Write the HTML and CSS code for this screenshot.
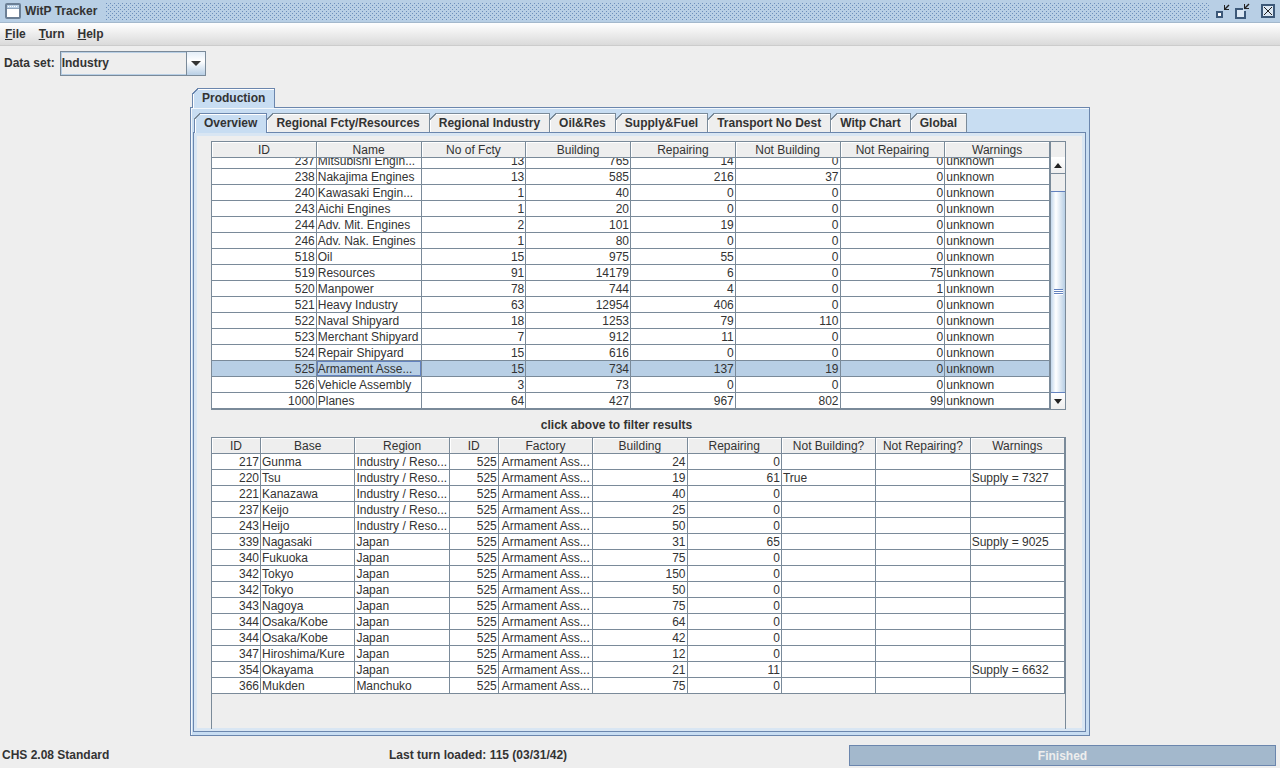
FILE: index.html
```html
<!DOCTYPE html>
<html lang="en">
<head>
    <meta charset="utf-8">
    <title>WitP Tracker</title>
    <link rel="stylesheet" href="styles.css">
</head>
<body>
    <header class="titlebar">
        <svg class="app-icon" width="16" height="16" viewBox="0 0 16 16">
            <rect x="1" y="1" width="14" height="14" rx="1" fill="#fff" stroke="#6b7f95" stroke-width="2"/>
            <path d="M2 3.500h12" stroke="#b8cfe5" stroke-width="3"/>
            <path d="M3 3.500h1M5 3.500h1M7 3.500h1M9 3.500h1M11 3.500h1" stroke="#fff"/>
            <path d="M2 5.500h12" stroke="#8fa5bd"/>
        </svg>
        <span class="title">WitP Tracker</span>
        <span class="grip"></span>
        <div class="window-buttons">
            <button aria-label="Minimize">
                <svg width="16" height="16" viewBox="0 0 16 16">
                    <rect x="3" y="9" width="5" height="5" fill="#fff" stroke="#3c5878" stroke-width="2"/>
                    <path d="M10.500 2v5M10 6.500h5" stroke="#222"/>
                    <path d="M11 6l4-4" stroke="#222" stroke-width="1.500"/>
                </svg>
            </button>
            <button aria-label="Maximize">
                <svg width="16" height="16" viewBox="0 0 16 16">
                    <path d="M9 6H2v9h9V8" fill="#dce8f4" stroke="#3c5878" stroke-width="2"/>
                    <path d="M10.500 1v5M10 5.500h5" stroke="#222"/>
                    <path d="M11 5l4-4" stroke="#222" stroke-width="1.500"/>
                </svg>
            </button>
            <button class="close" aria-label="Close">
                <svg width="16" height="16" viewBox="0 0 16 16">
                    <rect x="2" y="2" width="12" height="12" fill="#dce8f4" stroke="#3c5878" stroke-width="2"/>
                    <path d="M4 4l8 8M12 4l-8 8" stroke="#222"/>
                </svg>
            </button>
        </div>
    </header>

    <nav class="menubar">
        <button><u>F</u>ile</button>
        <button><u>T</u>urn</button>
        <button><u>H</u>elp</button>
    </nav>

    <div class="toolbar">
        <label for="dataset">Data set:</label>
        <div class="combo">
            <select id="dataset"><option>Industry</option></select>
            <span class="combo-arrow"><svg width="10" height="6" viewBox="0 0 10 6"><path d="M0 0h10L5 5z" fill="#333"/></svg></span>
        </div>
    </div>

    <main class="tabs">
        <div class="tab-row"><button class="tab active">Production</button></div>
        <div class="outer-panel">
            <div class="tab-row">
                <button class="tab active">Overview</button>
                <button class="tab">Regional Fcty/Resources</button>
                <button class="tab">Regional Industry</button>
                <button class="tab">Oil&amp;Res</button>
                <button class="tab">Supply&amp;Fuel</button>
                <button class="tab">Transport No Dest</button>
                <button class="tab">Witp Chart</button>
                <button class="tab">Global</button>
            </div>
            <div class="inner-panel">
                <div class="scroll-box">
                    <table class="summary">
                        <thead>
                            <tr><th>ID</th><th>Name</th><th>No of Fcty</th><th>Building</th><th>Repairing</th><th>Not Building</th><th>Not Repairing</th><th>Warnings</th></tr>
                        </thead>
                        <tbody>
                            <tr class="cut"><td><div>237</div></td><td><div>Mitsubishi Engin...</div></td><td><div>13</div></td><td><div>765</div></td><td><div>14</div></td><td><div>0</div></td><td><div>0</div></td><td><div>unknown</div></td></tr>
                            <tr><td>238</td><td>Nakajima Engines</td><td>13</td><td>585</td><td>216</td><td>37</td><td>0</td><td>unknown</td></tr>
                            <tr><td>240</td><td>Kawasaki Engin...</td><td>1</td><td>40</td><td>0</td><td>0</td><td>0</td><td>unknown</td></tr>
                            <tr><td>243</td><td>Aichi Engines</td><td>1</td><td>20</td><td>0</td><td>0</td><td>0</td><td>unknown</td></tr>
                            <tr><td>244</td><td>Adv. Mit. Engines</td><td>2</td><td>101</td><td>19</td><td>0</td><td>0</td><td>unknown</td></tr>
                            <tr><td>246</td><td>Adv. Nak. Engines</td><td>1</td><td>80</td><td>0</td><td>0</td><td>0</td><td>unknown</td></tr>
                            <tr><td>518</td><td>Oil</td><td>15</td><td>975</td><td>55</td><td>0</td><td>0</td><td>unknown</td></tr>
                            <tr><td>519</td><td>Resources</td><td>91</td><td>14179</td><td>6</td><td>0</td><td>75</td><td>unknown</td></tr>
                            <tr><td>520</td><td>Manpower</td><td>78</td><td>744</td><td>4</td><td>0</td><td>1</td><td>unknown</td></tr>
                            <tr><td>521</td><td>Heavy Industry</td><td>63</td><td>12954</td><td>406</td><td>0</td><td>0</td><td>unknown</td></tr>
                            <tr><td>522</td><td>Naval Shipyard</td><td>18</td><td>1253</td><td>79</td><td>110</td><td>0</td><td>unknown</td></tr>
                            <tr><td>523</td><td>Merchant Shipyard</td><td>7</td><td>912</td><td>11</td><td>0</td><td>0</td><td>unknown</td></tr>
                            <tr><td>524</td><td>Repair Shipyard</td><td>15</td><td>616</td><td>0</td><td>0</td><td>0</td><td>unknown</td></tr>
                            <tr class="selected"><td>525</td><td class="focus">Armament Asse...</td><td>15</td><td>734</td><td>137</td><td>19</td><td>0</td><td>unknown</td></tr>
                            <tr><td>526</td><td>Vehicle Assembly</td><td>3</td><td>73</td><td>0</td><td>0</td><td>0</td><td>unknown</td></tr>
                            <tr><td>1000</td><td>Planes</td><td>64</td><td>427</td><td>967</td><td>802</td><td>99</td><td>unknown</td></tr>
                        </tbody>
                    </table>
                    <div class="scrollbar">
                        <div class="corner"></div>
                        <button aria-label="Scroll up"><svg width="8" height="5" viewBox="0 0 8 5"><path d="M0 5h8L4 0z" fill="#222"/></svg></button>
                        <div class="track"></div>
                        <div class="thumb"><span></span></div>
                        <button aria-label="Scroll down"><svg width="8" height="5" viewBox="0 0 8 5"><path d="M0 0h8L4 5z" fill="#222"/></svg></button>
                    </div>
                </div>

                <p class="hint">click above to filter results</p>

                <div class="detail-box">
                    <table class="detail">
                        <colgroup><col class="id"><col><col><col class="id"><col><col><col><col><col><col></colgroup>
                        <thead>
                            <tr><th>ID</th><th>Base</th><th>Region</th><th>ID</th><th>Factory</th><th>Building</th><th>Repairing</th><th>Not Building?</th><th>Not Repairing?</th><th>Warnings</th></tr>
                        </thead>
                        <tbody>
                            <tr><td>217</td><td>Gunma</td><td>Industry / Reso...</td><td>525</td><td>Armament Ass...</td><td>24</td><td>0</td><td></td><td></td><td></td></tr>
                            <tr><td>220</td><td>Tsu</td><td>Industry / Reso...</td><td>525</td><td>Armament Ass...</td><td>19</td><td>61</td><td>True</td><td></td><td>Supply = 7327</td></tr>
                            <tr><td>221</td><td>Kanazawa</td><td>Industry / Reso...</td><td>525</td><td>Armament Ass...</td><td>40</td><td>0</td><td></td><td></td><td></td></tr>
                            <tr><td>237</td><td>Keijo</td><td>Industry / Reso...</td><td>525</td><td>Armament Ass...</td><td>25</td><td>0</td><td></td><td></td><td></td></tr>
                            <tr><td>243</td><td>Heijo</td><td>Industry / Reso...</td><td>525</td><td>Armament Ass...</td><td>50</td><td>0</td><td></td><td></td><td></td></tr>
                            <tr><td>339</td><td>Nagasaki</td><td>Japan</td><td>525</td><td>Armament Ass...</td><td>31</td><td>65</td><td></td><td></td><td>Supply = 9025</td></tr>
                            <tr><td>340</td><td>Fukuoka</td><td>Japan</td><td>525</td><td>Armament Ass...</td><td>75</td><td>0</td><td></td><td></td><td></td></tr>
                            <tr><td>342</td><td>Tokyo</td><td>Japan</td><td>525</td><td>Armament Ass...</td><td>150</td><td>0</td><td></td><td></td><td></td></tr>
                            <tr><td>342</td><td>Tokyo</td><td>Japan</td><td>525</td><td>Armament Ass...</td><td>50</td><td>0</td><td></td><td></td><td></td></tr>
                            <tr><td>343</td><td>Nagoya</td><td>Japan</td><td>525</td><td>Armament Ass...</td><td>75</td><td>0</td><td></td><td></td><td></td></tr>
                            <tr><td>344</td><td>Osaka/Kobe</td><td>Japan</td><td>525</td><td>Armament Ass...</td><td>64</td><td>0</td><td></td><td></td><td></td></tr>
                            <tr><td>344</td><td>Osaka/Kobe</td><td>Japan</td><td>525</td><td>Armament Ass...</td><td>42</td><td>0</td><td></td><td></td><td></td></tr>
                            <tr><td>347</td><td>Hiroshima/Kure</td><td>Japan</td><td>525</td><td>Armament Ass...</td><td>12</td><td>0</td><td></td><td></td><td></td></tr>
                            <tr><td>354</td><td>Okayama</td><td>Japan</td><td>525</td><td>Armament Ass...</td><td>21</td><td>11</td><td></td><td></td><td>Supply = 6632</td></tr>
                            <tr><td>366</td><td>Mukden</td><td>Manchuko</td><td>525</td><td>Armament Ass...</td><td>75</td><td>0</td><td></td><td></td><td></td></tr>
                        </tbody>
                    </table>
                </div>
            </div>
        </div>
    </main>

    <footer class="statusbar">
        <span>CHS 2.08 Standard</span>
        <span>Last turn loaded: 115 (03/31/42)</span>
        <div class="progress" role="progressbar" aria-valuenow="100">Finished</div>
    </footer>
</body>
</html>
```
FILE: styles.css
```css
* { box-sizing: border-box; }
body {
    margin: 0;
    min-height: 100vh;
    display: flex;
    flex-direction: column;
    background: #eee;
    color: #333;
    font: bold 12px/15px "Liberation Sans", Arial, sans-serif;
}
button, select {
    font: inherit;
    color: inherit;
    background: none;
    border: none;
    padding: 0;
    margin: 0;
}

/* title bar */
.titlebar {
    display: flex;
    align-items: center;
    height: 23px;
    padding: 0 4px 0 5px;
    background: #b8cfe5;
    border-bottom: 1px solid #a3b8cc;
}
.title { margin: 0 9px 0 4px; }
.grip {
    flex: 1;
    height: 17px;
    background-image:
        linear-gradient(90deg, #7394c0 1px, transparent 1px),
        linear-gradient(#b8cfe5 1px, transparent 1px);
    /* two offset layers of single dots */
    background:
        conic-gradient(from 270deg at 1px 1px, #6c8ebb 90deg, transparent 0) 0 0 / 4px 4px,
        conic-gradient(from 270deg at 1px 1px, #6c8ebb 90deg, transparent 0) 2px 2px / 4px 4px;
}
.window-buttons { display: flex; gap: 4px; margin-left: 5px; }
.window-buttons button { width: 16px; height: 16px; }
.window-buttons svg { display: block; }
.window-buttons .close { margin-left: 6px; }

/* menu */
.menubar {
    display: flex;
    gap: 13px;
    height: 23px;
    padding: 0 5px;
    background: linear-gradient(#fff, #dadada);
    border-bottom: 1px solid #ccc;
}

.toolbar {
    display: flex;
    align-items: center;
    gap: 5px;
    padding: 5px 4px 12px;
}
.combo {
    display: flex;
    width: 146px;
    height: 25px;
    border: 1px solid #7a8a99;
    box-shadow: inset 0 0 0 1px #b8cfe5;
}
.combo select {
    flex: 1;
    appearance: none;
    padding-left: 1px;
}
.combo-arrow {
    display: flex;
    align-items: center;
    justify-content: center;
    width: 19px;
    border-left: 1px solid #7a8a99;
    background: linear-gradient(#e4eef8, #fff 40%, #b8cfe5);
}

/* tabs */
.tabs {
    flex: 1;
    display: flex;
    flex-direction: column;
    margin: 0 190px;
}
.tab-row { display: flex; padding-left: 2px; }
.tab {
    position: relative;
    height: 19px;
    padding: 0 9px;
    background: #eee;
    border: 1px solid #7a8a99;
    border-width: 1px 1px 0 0;
    box-shadow: inset 1px 1px #fff;
}
.tab::before {
    content: "";
    position: absolute;
    top: -1px;
    left: 0;
    width: 7px;
    height: 7px;
    background: linear-gradient(135deg, #c8ddf2 0 4px, #7a8a99 4px 5px, transparent 5px);
}
.tab.active {
    height: 20px;
    margin-bottom: -1px;
    background: #c8ddf2;
    border-color: #6b86ad;
    border-left-width: 1px;
    z-index: 1;
}
.tab.active::before { left: -1px; }
.tabs > .tab-row .tab::before {
    background: linear-gradient(135deg, #eee 0 4px, #6b86ad 4px 5px, transparent 5px);
}
.outer-panel {
    flex: 1;
    display: flex;
    flex-direction: column;
    padding: 5px 3px 3px 2px;
    background: #c8ddf2;
    border: 1px solid #6b86ad;
    box-shadow: inset 1px 1px #f4f8fc;
}
.outer-panel .tab-row { padding-left: 1px; }
.inner-panel {
    flex: 1;
    display: flex;
    flex-direction: column;
    padding: 8px 19px 2px 17px;
    background: #eee;
    border: 1px solid #6b86ad;
    box-shadow: inset 0 0 0 3px #d9e6f3;
}

/* tables */
table {
    flex: 1;
    table-layout: fixed;
    width: 100%;
    border-collapse: separate;
    border-spacing: 0;
    font-weight: normal;
    line-height: 14px;
}
th, td {
    height: 16px;
    padding: 1px 1px 0;
    border: 1px solid #7a8a99;
    border-width: 0 1px 1px 0;
    white-space: nowrap;
    overflow: hidden;
}
th {
    font-weight: normal;
    background: #eee;
    box-shadow: inset 1px 1px #fff;
}
td { background: #fff; }
.scroll-box {
    display: flex;
    border: 1px solid #7a8a99;
    border-width: 1px 0 1px 1px;
}
.summary td { text-align: right; }
.summary td:nth-child(2), .summary td:last-child { text-align: left; }

/* row scrolled partly under the header */
.cut td { height: 11px; padding-top: 0; }
.cut div {
    display: flex;
    flex-direction: column;
    justify-content: flex-end;
    height: 10px;
    overflow: hidden;
}
.summary .selected td { background: #b8cfe5; }
.summary .focus { box-shadow: inset 0 0 0 1px #6382bf; }

.scrollbar {
    display: flex;
    flex-direction: column;
    width: 16px;
    border-right: 1px solid #7a8a99;
    border-left: 1px solid #7a8a99;
}
.corner { height: 16px; border-bottom: 1px solid #fff; }
.scrollbar button {
    display: flex;
    align-items: center;
    justify-content: center;
    height: 16px;
    background: linear-gradient(#fff, #eee);
    border-bottom: 1px solid #7a8a99;
}
.scrollbar button:last-child { border-bottom: none; }
.track { height: 17px; }
.thumb {
    flex: 1;
    display: flex;
    align-items: center;
    justify-content: center;
    background: linear-gradient(90deg, #c4d8ec, #fff 35%, #b8cfe5);
    border: 1px solid #6382bf;
    border-width: 1px 0;
}
.thumb span {
    width: 9px;
    height: 6px;
    background: repeating-linear-gradient(#6382bf 0 1px, #fff 1px 2px);
}
.hint { margin: 0; padding: 8px 44px 4px 0; text-align: center; }
.detail-box {
    flex: 1;
    display: flex;
    align-items: flex-start;
    border: 1px solid #7a8a99;
    border-bottom: none;
}
.detail .id { width: 49px; }
.detail td:nth-child(1), .detail td:nth-child(4),
.detail td:nth-child(6), .detail td:nth-child(7) { text-align: right; }
.detail td:nth-child(5) { padding-left: 3px; }

/* status bar */
.statusbar {
    display: grid;
    grid-template-columns: 387fr 460fr 427fr;
    align-items: center;
    padding: 9px 4px 2px 2px;
}
.progress {
    height: 21px;
    line-height: 20px;
    text-align: center;
    color: #eee;
    background: #a3b8cc;
    border: 1px solid #6b86ad;
}
```
